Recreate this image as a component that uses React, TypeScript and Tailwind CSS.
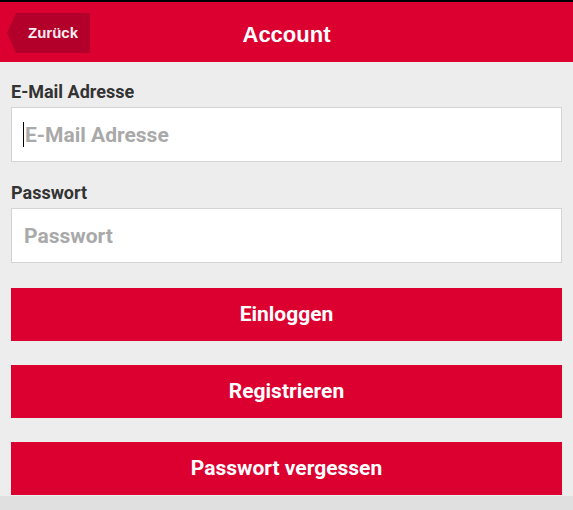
export default function App() {
  return (
    <div className="min-h-screen bg-[#e0e0e0] font-['Roboto',sans-serif]">
      <header className="grid h-[62px] grid-cols-[1fr_auto_1fr] items-center border-t-2 border-black bg-[#dc0030]">
        <div className="flex items-center pl-[7px] pt-[2px]">
          <button className="flex h-10 items-center bg-[#b3002a] pl-[21px] pr-3 font-['Liberation_Sans',sans-serif] text-[15px] font-bold text-[#fdeef2] [clip-path:polygon(9px_0,100%_0,100%_100%,9px_100%,0_50%)]">
            Zurück
          </button>
        </div>
        <h1 className="pt-[5px] font-['Liberation_Sans',sans-serif] text-[22px] font-bold text-white">Account</h1>
        <div />
      </header>

      <main className="bg-[#ededed] px-[11px] pb-px pt-[19px]">
        <label className="mb-1 block text-[18px] font-bold leading-[22px] text-[#333]">E-Mail Adresse</label>
        <div className="relative">
          <input
            type="email"
            placeholder="E-Mail Adresse"
            className="block h-[55px] w-full border border-[#d4d4d4] bg-white pl-[13px] pr-3 text-[21px] font-bold text-[#333] outline-none placeholder:text-[#a9a9a9]"
          />
          {/* caret of the focused field */}
          <span className="absolute left-[12px] top-[15px] h-[25px] w-px bg-black" />
        </div>

        <label className="mb-1 mt-5 block text-[18px] font-bold leading-[22px] text-[#333]">Passwort</label>
        <input
          type="password"
          placeholder="Passwort"
          className="block h-[55px] w-full border border-[#d4d4d4] bg-white pl-3 pr-3 text-[21px] font-bold text-[#333] outline-none placeholder:text-[#a9a9a9]"
        />

        <div className="mt-[25px] flex flex-col gap-6">
          <button className="h-[53px] w-full bg-[#dc0030] text-[21px] font-bold text-white">Einloggen</button>
          <button className="h-[53px] w-full bg-[#dc0030] text-[21px] font-bold text-white">Registrieren</button>
          <button className="h-[53px] w-full bg-[#dc0030] text-[21px] font-bold text-white">Passwort vergessen</button>
        </div>
      </main>
    </div>
  );
}
